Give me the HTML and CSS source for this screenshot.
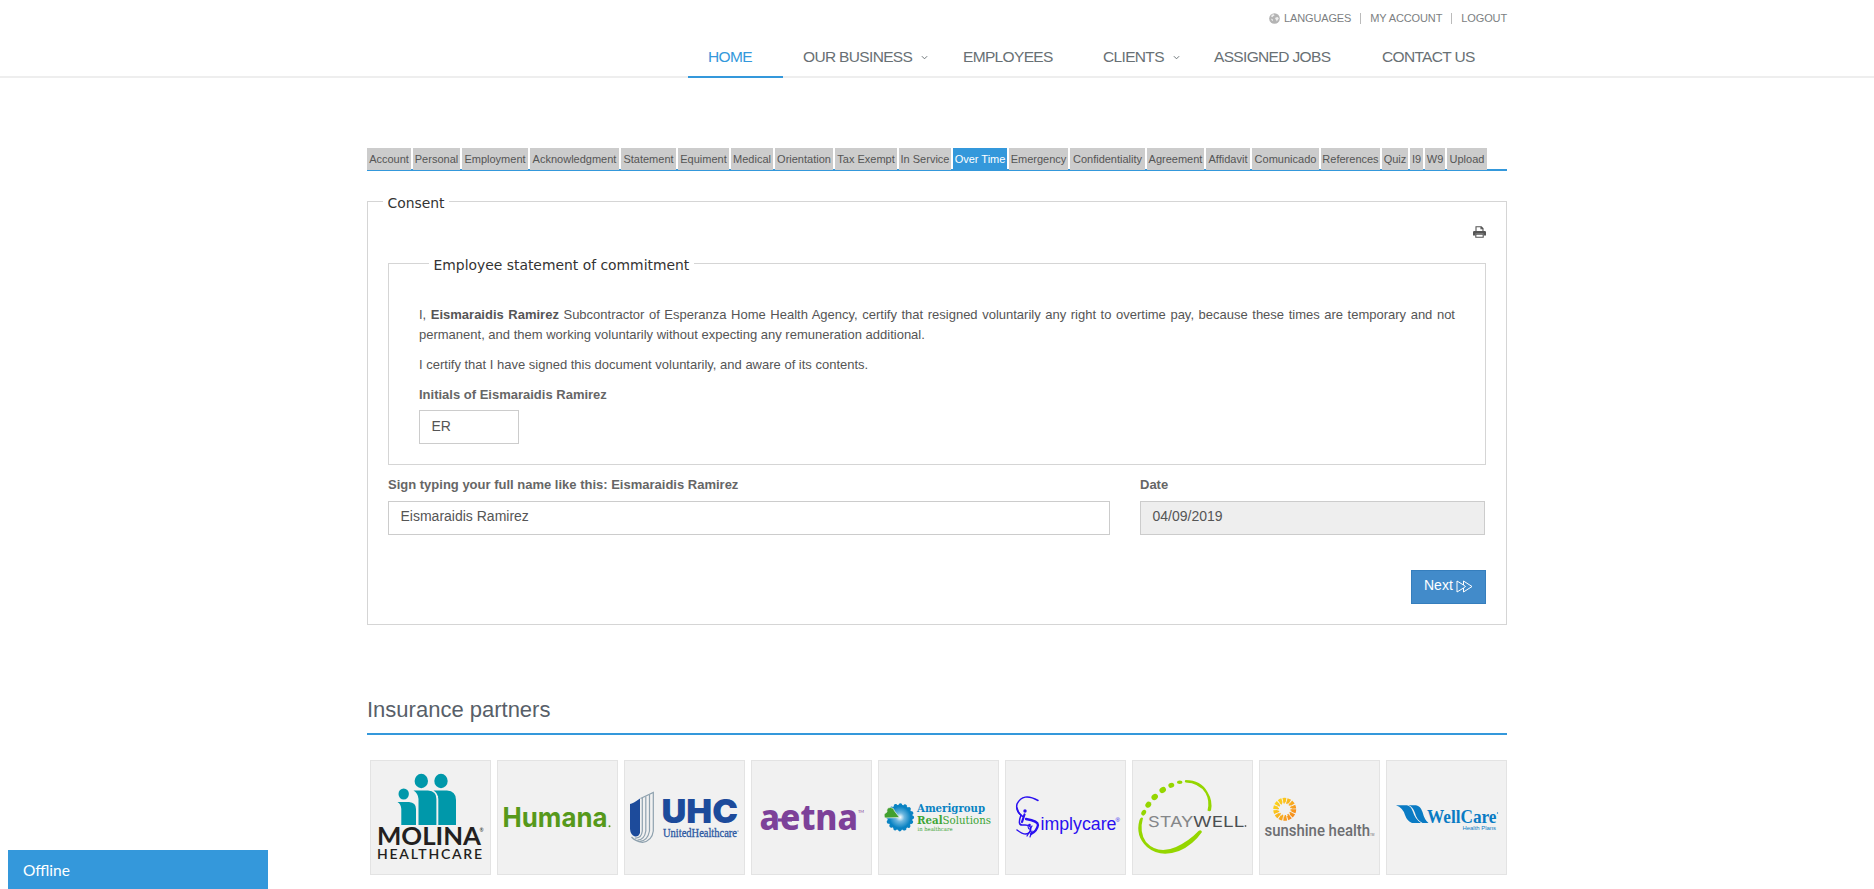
FILE: index.html
```html
<!DOCTYPE html>
<html lang="en">
<head>
<meta charset="utf-8">
<title>Over Time Consent</title>
<link rel="stylesheet" href="styles.css">
</head>
<body>
<header class="header">
  <div class="container">
    <ul class="topbar">
      <li><svg class="globe" viewBox="0 0 12 12"><circle cx="6" cy="6" r="5.8" fill="#b4b4b4"/><path d="M3 2 5 1.400 6.200 2.400 4.600 3.600 3.600 4.600 2.400 4ZM7.200 5 9.400 4.400 10.800 6 9.400 7.600 8.600 9.200 7.600 7.400 6.600 6.400ZM2 6 4.400 7 4 9 3 8Z" fill="#eee"/></svg>Languages</li>
      <li>My Account</li>
      <li>Logout</li>
    </ul>
    <nav class="nav">
      <a class="nav-item home active">HOME</a>
      <a class="nav-item business">OUR BUSINESS<svg class="caret" viewBox="0 0 8 5"><path d="M1 1 4 4 7 1"/></svg></a>
      <a class="nav-item employees">EMPLOYEES</a>
      <a class="nav-item clients">CLIENTS<svg class="caret" viewBox="0 0 8 5"><path d="M1 1 4 4 7 1"/></svg></a>
      <a class="nav-item jobs">ASSIGNED JOBS</a>
      <a class="nav-item contact">CONTACT US</a>
    </nav>
  </div>
</header>

<main class="container">
  <div class="tabs">
    <a class="tab w44">Account</a><a class="tab w47">Personal</a><a class="tab w66">Employment</a><a class="tab w89">Acknowledgment</a><a class="tab w55">Statement</a><a class="tab w51">Equiment</a><a class="tab w42">Medical</a><a class="tab w58">Orientation</a><a class="tab w62">Tax Exempt</a><a class="tab w52">In Service</a><a class="tab w54 current">Over Time</a><a class="tab w59">Emergency</a><a class="tab w75">Confidentiality</a><a class="tab w57">Agreement</a><a class="tab w44">Affidavit</a><a class="tab w67">Comunicado</a><a class="tab w59">References</a><a class="tab w26">Quiz</a><a class="tab w13">I9</a><a class="tab w20">W9</a><a class="tab w40">Upload</a>
  </div>

  <fieldset class="consent">
    <legend class="legend">Consent</legend>
    <div class="print-row">
      <svg class="printer" viewBox="0 0 13 12"><path d="M3 5.5V.7h5.3L10 2.4v3.1M8 .7v2h2" fill="none" stroke="#555" stroke-width="1.1"/><path d="M1.5 5h10A1.3 1.3 0 0 1 13 6.300V9.500H10.500V7.800H2.500V9.500H0V6.300A1.300 1.300 0 0 1 1.500 5Z" fill="#555"/><path d="M2.800 8.200h7.400v3H2.800Z" fill="#fff" stroke="#555" stroke-width="1.1"/></svg>
    </div>
    <fieldset class="statement">
      <legend class="legend legend-inner">Employee statement of commitment</legend>
      <p class="para justified">I, <b>Eismaraidis Ramirez</b> Subcontractor of Esperanza Home Health Agency, certify that resigned voluntarily any right to overtime pay, because these times are temporary and not permanent, and them working voluntarily without expecting any remuneration additional.</p>
      <p class="para">I certify that I have signed this document voluntarily, and aware of its contents.</p>
      <label class="label initials-label">Initials of Eismaraidis Ramirez</label>
      <div class="field initials">ER</div>
    </fieldset>
    <div class="sign-row">
      <div class="sign-name">
        <label class="label">Sign typing your full name like this: Eismaraidis Ramirez</label>
        <div class="field raised">Eismaraidis Ramirez</div>
      </div>
      <div class="sign-date">
        <label class="label">Date</label>
        <div class="field raised readonly">04/09/2019</div>
      </div>
    </div>
    <div class="actions">
      <button class="next" type="button">Next <svg class="forward" viewBox="0 0 17 13"><path d="M1 1 7.500 5V1L16 6.500 7.500 12V8L1 12Z M7.500 5 9.500 6.500 7.500 8"/></svg></button>
    </div>
  </fieldset>

  <h2 class="heading">Insurance partners</h2>
  <div class="partners">
    <div class="card"><svg viewBox="0 0 119 113">
      <g fill="#0098aa"><ellipse cx="50.300" cy="20" rx="6.700" ry="7.200"/><ellipse cx="70" cy="20" rx="6.700" ry="7.200"/><ellipse cx="32.700" cy="33" rx="5.200" ry="5.500"/>
      <path d="M42.500 29.500H57Q65.500 30 65.500 38V64H47.500V38Q47 32 42.500 29.500ZM62.500 29.500H76Q85 30 85 39V64H67.300V38Q67 32 62.500 29.500ZM26.500 41H38Q45 41.500 45 48V64H30.300V48Q30 43 26.500 41Z"/></g>
      <path d="M66.400 35V64" stroke="#f1f1f1" stroke-width="1.300"/>
      <text x="6" y="83.700" font-family="Lato" font-weight="700" font-size="24.500" textLength="104" lengthAdjust="spacingAndGlyphs" fill="#231f20">MOLINA</text>
      <text x="6" y="97.700" font-family="Lato" font-weight="600" font-size="14" textLength="105" lengthAdjust="spacing" fill="#231f20">HEALTHCARE</text>
      <text x="108.500" y="71" font-family="Lato" font-size="5" fill="#231f20">®</text></svg></div>
    <div class="card"><svg viewBox="0 0 119 113"><text x="4.500" y="66.300" font-family="Inter" font-weight="700" font-size="27.500" textLength="105" lengthAdjust="spacingAndGlyphs" fill="#56991b">Humana</text><circle cx="111.500" cy="65.300" r="1" fill="#56991b"/></svg></div>
    <div class="card"><svg viewBox="0 0 119 113">
      <path d="M5 43Q8 42.500 15 37.500V72Q13.500 76 10 75.500Q5.500 74 5 68Z" fill="#1d4b9b"/>
      <g fill="none" stroke="#8ea1ae" stroke-width="1.200"><path d="M15.500 37.500 28.300 31.500V70Q27 80 17.500 81.300Q10 80 6.500 76"/><path d="M17.300 37V70Q16.500 77.500 10 77"/><path d="M20.800 35.500V70Q19.500 79 12.500 79"/><path d="M24.500 33.800V70Q22.500 80 15 80.300"/></g>
      <text x="36.500" y="62" font-family="Inter" font-weight="900" font-size="33" textLength="76.500" lengthAdjust="spacingAndGlyphs" fill="#1d4b9b">UHC</text>
      <text x="38" y="75.500" font-family="Liberation Serif" font-size="11.800" stroke="#2c58a2" stroke-width=".3" textLength="74" lengthAdjust="spacingAndGlyphs" fill="#2c58a2">UnitedHealthcare</text><circle cx="113" cy="70" r=".6" fill="#2c58a2"/></svg></div>
    <div class="card"><svg viewBox="0 0 119 113"><text x="7.500" y="68.500" font-family="Noto Sans" font-weight="800" font-size="36" textLength="98.500" lengthAdjust="spacingAndGlyphs" fill="#7d4199">aetna</text><path d="M26 59H40" stroke="#7d4199" stroke-width="3.200"/><text x="106" y="52" font-family="Lato" font-size="4" fill="#7d4199">TM</text></svg></div>
    <div class="card"><svg viewBox="0 0 119 113">
      <defs><radialGradient id="glow"><stop offset="0" stop-color="#fff"/><stop offset=".35" stop-color="#6db7df"/><stop offset=".85" stop-color="#0a83c3"/></radialGradient></defs>
      <circle cx="21" cy="56.300" r="12.600" fill="url(#glow)"/><circle cx="21" cy="56.300" r="12.300" fill="none" stroke="#0a83c3" stroke-width="3.600" stroke-linecap="round" stroke-dasharray=".1 4.730"/>
      <path d="M20.500 56.500 6 57Q3.500 53 8 51Q7 46.500 11.500 46.500Q15 46.500 15.500 50Z" fill="#42a02f" stroke="#f1f1f1" stroke-width=".7"/>
      <text x="38" y="51" font-family="DejaVu Serif" font-weight="700" font-size="11.500" textLength="68" lengthAdjust="spacingAndGlyphs" fill="#0a83c3">Amerigroup</text>
      <text x="38" y="62.700" font-family="DejaVu Serif" font-size="11.500" textLength="74" lengthAdjust="spacingAndGlyphs" fill="#3da535"><tspan font-weight="700">Real</tspan>Solutions</text>
      <text x="38.500" y="69.700" font-family="DejaVu Serif" font-size="5.500" textLength="35" lengthAdjust="spacingAndGlyphs" fill="#3da535">in healthcare</text></svg></div>
    <div class="card"><svg viewBox="0 0 119 113">
      <g fill="none" stroke="#2a10f0" stroke-linecap="round"><path d="M32 39.500Q17 31 11 43Q9.500 50 15 54" stroke-width="1.500"/><path d="M11 47Q13 54 17 55.500M15 54Q11 65 17 64Q27 63 24 71Q20 76 11 69" stroke-width="1.500"/><path d="M18.500 53.500 16 61" stroke-width="2.200"/><path d="M20 58Q32 60 32 64Q31 70 25 73" stroke-width="2.300"/><path d="M22 65.500Q23 71 26 65M24 70 21 75M26 70 24 76" stroke-width="1.200"/></g>
      <circle cx="19" cy="50" r="1.700" fill="#2a10f0"/><circle cx="23.500" cy="64" r="1.300" fill="#2a10f0"/>
      <text x="34.500" y="69.300" font-family="Liberation Sans" font-size="17.500" textLength="76" lengthAdjust="spacingAndGlyphs" fill="#2a10f0">implycare</text><text x="109.500" y="60.500" font-family="Liberation Sans" font-size="6" fill="#2a10f0">®</text></svg></div>
    <div class="card"><svg viewBox="0 0 119 113"><g fill="#95d600">
      <ellipse cx="46.700" cy="21.300" rx="2.800" ry="1.700"/><ellipse cx="38.300" cy="24.300" rx="3" ry="2.400" transform="rotate(-20 38.300 24.300)"/><ellipse cx="29.700" cy="29" rx="3.400" ry="2.800" transform="rotate(-30 29.700 29)"/><ellipse cx="21.700" cy="36" rx="3.400" ry="2.900" transform="rotate(-40 21.700 36)"/><ellipse cx="15.300" cy="43.700" rx="3.200" ry="2.700" transform="rotate(-50 15.300 43.700)"/><ellipse cx="10.700" cy="51.700" rx="3" ry="2.200" transform="rotate(-60 10.700 51.700)"/>
      <path d="M52.500 19Q68 19 74.500 31Q80 40 78 49.500Q76.500 51 74.500 49.500Q77 40 72.500 32Q66 22 52.500 21.500Q51 20.300 52.500 19ZM10 57Q6 71 13 81Q25 94 43 86Q56 80 65.500 70Q68 68 69 71Q60 84 46 90Q27 97 14 86Q2 75 6.500 59Q8 55.500 10 57Z"/></g>
      <text x="15" y="65.700" font-family="Inter" font-size="15" textLength="45.500" lengthAdjust="spacingAndGlyphs" fill="#858789">STAY</text><text x="60" y="65.700" font-family="Inter" font-size="15" textLength="51.500" lengthAdjust="spacingAndGlyphs" fill="#4c4f51">WELL</text><circle cx="112.500" cy="65" r=".9" fill="#666"/></svg></div>
    <div class="card"><svg viewBox="0 0 119 113">
      <defs><linearGradient id="sun" gradientUnits="userSpaceOnUse" x1="14" y1="40" x2="36" y2="57"><stop offset="0" stop-color="#fcdc1c"/><stop offset="1" stop-color="#f5821f"/></linearGradient></defs>
      <g fill="none" stroke="url(#sun)"><circle cx="24.700" cy="48.300" r="9.300" stroke-width="4.400" stroke-dasharray="3.200 .97"/><circle cx="24.700" cy="48.300" r="6.800" stroke-width="2" stroke-dasharray="1.500 1.550"/></g>
      <text x="4.500" y="75" font-family="Roboto" font-weight="500" font-size="17" textLength="105.500" lengthAdjust="spacingAndGlyphs" fill="#6d6e71">sunshine health</text><text x="110" y="75" font-family="Roboto" font-size="3" fill="#6d6e71">TM</text></svg></div>
    <div class="card"><svg viewBox="0 0 119 113">
      <path d="M9 44.300H20Q24 45 26 51Q28 58 34 62H25Q20 60 18 54Q16 47 9 44.300ZM21.500 44.300H29Q33.500 45 35.500 51Q37.500 59 41.500 62H35.500Q29.500 59 28 52Q26 46 21.500 44.300Z" fill="#0a7bc4"/>
      <text x="40" y="62" font-family="Liberation Serif" font-weight="700" font-size="19.500" textLength="69.500" lengthAdjust="spacingAndGlyphs" fill="#0a7bc4">WellCare</text><circle cx="110.500" cy="52" r=".7" fill="#0a7bc4"/>
      <text x="75.500" y="69" font-family="Liberation Sans" font-size="6" textLength="33.500" lengthAdjust="spacingAndGlyphs" fill="#0a7bc4">Health Plans</text></svg></div>
  </div>
</main>
<div class="chat">Offline</div>
</body>
</html>
```
FILE: styles.css
```css
* { box-sizing: border-box; }
body { margin: 0; height: 889px; overflow: hidden; position: relative; background: #fff; color: #555; font: 13px/20px "Liberation Sans", Arial, sans-serif; }
.container { width: 1140px; margin: 0 auto; }

.header { height: 78px; border-bottom: 2px solid #eee; }
.topbar { display: flex; justify-content: flex-end; align-items: center; height: 36px; margin: 0; padding: 0; list-style: none; font-size: 11px; line-height: 12px; letter-spacing: -.12px; text-transform: uppercase; color: #7c8082; }
.topbar li { display: flex; align-items: center; height: 11px; }
.topbar li + li { margin-left: 9px; padding-left: 9px; border-left: 1px solid #bbb; }
.globe { width: 11px; height: 11px; margin-right: 4px; }
.nav { display: flex; justify-content: flex-end; height: 42px; }
.nav-item { padding: 11px 0 0 20px; font-size: 15.5px; line-height: 20px; letter-spacing: -.66px; color: #687074; border-bottom: 2px solid transparent; white-space: nowrap; }
.nav-item.active { color: #3498db; border-color: #3498db; }
.home { width: 95px; }
.business { width: 160px; }
.employees { width: 140px; }
.clients { width: 111px; }
.jobs { width: 168px; }
.contact { width: 145px; }
.caret { width: 7px; height: 5px; margin: 0 0 2px 9px; fill: none; stroke: #687074; stroke-width: 1.1; }

.tabs { display: flex; gap: 2px; height: 23px; margin-top: 70px; border-bottom: 2px solid #3498db; }
.tab { height: 22px; padding-top: 1px; background: #ccc; color: #555; font-size: 11px; line-height: 20px; text-align: center; white-space: nowrap; }
.tab.current { background: #3498db; color: #fff; height: 23px; }
.w13 { width: 13px; }
.w20 { width: 20px; }
.w26 { width: 26px; }
.w40 { width: 40px; }
.w42 { width: 42px; }
.w44 { width: 44px; }
.w47 { width: 47px; }
.w51 { width: 51px; }
.w52 { width: 52px; }
.w54 { width: 54px; }
.w55 { width: 55px; }
.w57 { width: 57px; }
.w58 { width: 58px; }
.w59 { width: 59px; }
.w62 { width: 62px; }
.w66 { width: 66px; }
.w67 { width: 67px; }
.w75 { width: 75px; }
.w89 { width: 89px; }

.consent { height: 434px; margin: 20px 0 0; padding: 0 20px; border: 1px solid #d5d5d5; }
.legend { height: 20px; margin-left: -5px; padding: 2px 4.5px 0; font: 13.9px/20px "DejaVu Sans", Verdana, sans-serif; color: #333; }
.legend-inner { margin-left: 10px; }
.print-row { display: flex; justify-content: flex-end; height: 42px; padding-top: 15px; }
.printer { width: 13px; height: 12px; }
.statement { height: 212px; margin: 0; padding: 32px 30px 0; border: 1px solid #d5d5d5; }
.para { margin: 0 0 10px; }
.justified { text-align: justify; }
.label { display: block; font-weight: 700; color: #666; line-height: 20px; }
.initials-label { margin-bottom: 5px; }
.field { height: 34px; padding: 5px 11.5px; border: 1px solid #ccc; background: #fff; font-size: 14px; line-height: 20px; color: #555; }
.raised { padding-top: 4px; }
.initials { width: 100px; }
.readonly { background: #eee; }
.sign-row { display: flex; gap: 30px; padding-top: 10px; }
.sign-row .label { margin-bottom: 6px; }
.sign-name { width: 722px; }
.sign-date { width: 345px; }
.actions { display: flex; justify-content: flex-end; padding-top: 35px; }
.next { display: flex; width: 75px; height: 34px; padding: 4px 0 0 12px; border: 1px solid #357ebd; background: #428bca; color: #fff; font: 14px/20px "Liberation Sans", Arial, sans-serif; white-space: pre; }
.forward { width: 17px; height: 13px; margin: 5px 0 0 -1px; fill: none; stroke: #fff; stroke-width: 1; }

.heading { height: 40px; margin: 70px 0 25px; border-bottom: 2px solid #3498db; font-size: 22px; line-height: 30px; font-weight: 400; color: #585f69; }
.partners { display: flex; gap: 6px; padding-left: 3px; }
.card { width: 121px; height: 115px; border: 1px solid #e3e3e3; background: #f1f1f1; }
.card svg { display: block; width: 119px; height: 113px; }
.chat { position: absolute; left: 8px; bottom: 0; width: 260px; height: 39px; padding: 10px 15px; background: #3498db; color: #fff; font: 15.5px/20px Lato, sans-serif; }
```
